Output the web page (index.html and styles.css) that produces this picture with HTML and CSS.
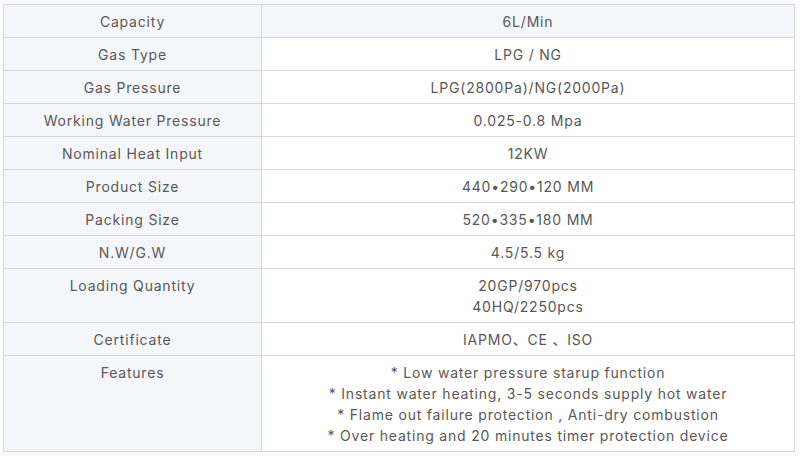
FILE: index.html
```html
<!DOCTYPE html>
<html>
<head>
<meta charset="utf-8">
<link rel="stylesheet" href="styles.css">
</head>
<body>
<table class="spec">
  <tbody>
    <tr class="head"><td class="label">Capacity</td><td class="value">6L/Min</td></tr>
    <tr><td class="label">Gas Type</td><td class="value">LPG / NG</td></tr>
    <tr><td class="label">Gas Pressure</td><td class="value">LPG(2800Pa)/NG(2000Pa)</td></tr>
    <tr><td class="label">Working Water Pressure</td><td class="value">0.025-0.8 Mpa</td></tr>
    <tr><td class="label">Nominal Heat Input</td><td class="value">12KW</td></tr>
    <tr><td class="label">Product Size</td><td class="value">440•290•120 MM</td></tr>
    <tr><td class="label">Packing Size</td><td class="value">520•335•180 MM</td></tr>
    <tr><td class="label">N.W/G.W</td><td class="value">4.5/5.5 kg</td></tr>
    <tr><td class="label">Loading Quantity</td><td class="value">20GP/970pcs<br>40HQ/2250pcs</td></tr>
    <tr><td class="label">Certificate</td><td class="value">IAPMO、CE 、ISO</td></tr>
    <tr><td class="label">Features</td><td class="value">* Low water pressure starup function<br>* Instant water heating, 3-5 seconds supply hot water<br>* Flame out failure protection , Anti-dry combustion<br>* Over heating and 20 minutes timer protection device</td></tr>
  </tbody>
</table>
</body>
</html>
```
FILE: styles.css
```css
html, body {
  margin: 0;
  background: #fbfbfb;
}
body {
  padding: 4px 0 0 3px;
  font-family: Inter, "Noto Sans CJK SC", sans-serif;
  font-size: 14px;
  letter-spacing: 0.8px;
  color: #585858;
}
.spec {
  border-collapse: collapse;
  width: 792px;
  background: #fff;
}
.spec td {
  border: 1px solid #d6d6d6;
  padding: 6px 6px 5px;
  line-height: 21px;
  text-align: center;
  vertical-align: top;
}
.spec .label {
  width: 245px;
  background: #f5f6fa;
}
.spec .head .value {
  background: #f5f6fa;
}
```
